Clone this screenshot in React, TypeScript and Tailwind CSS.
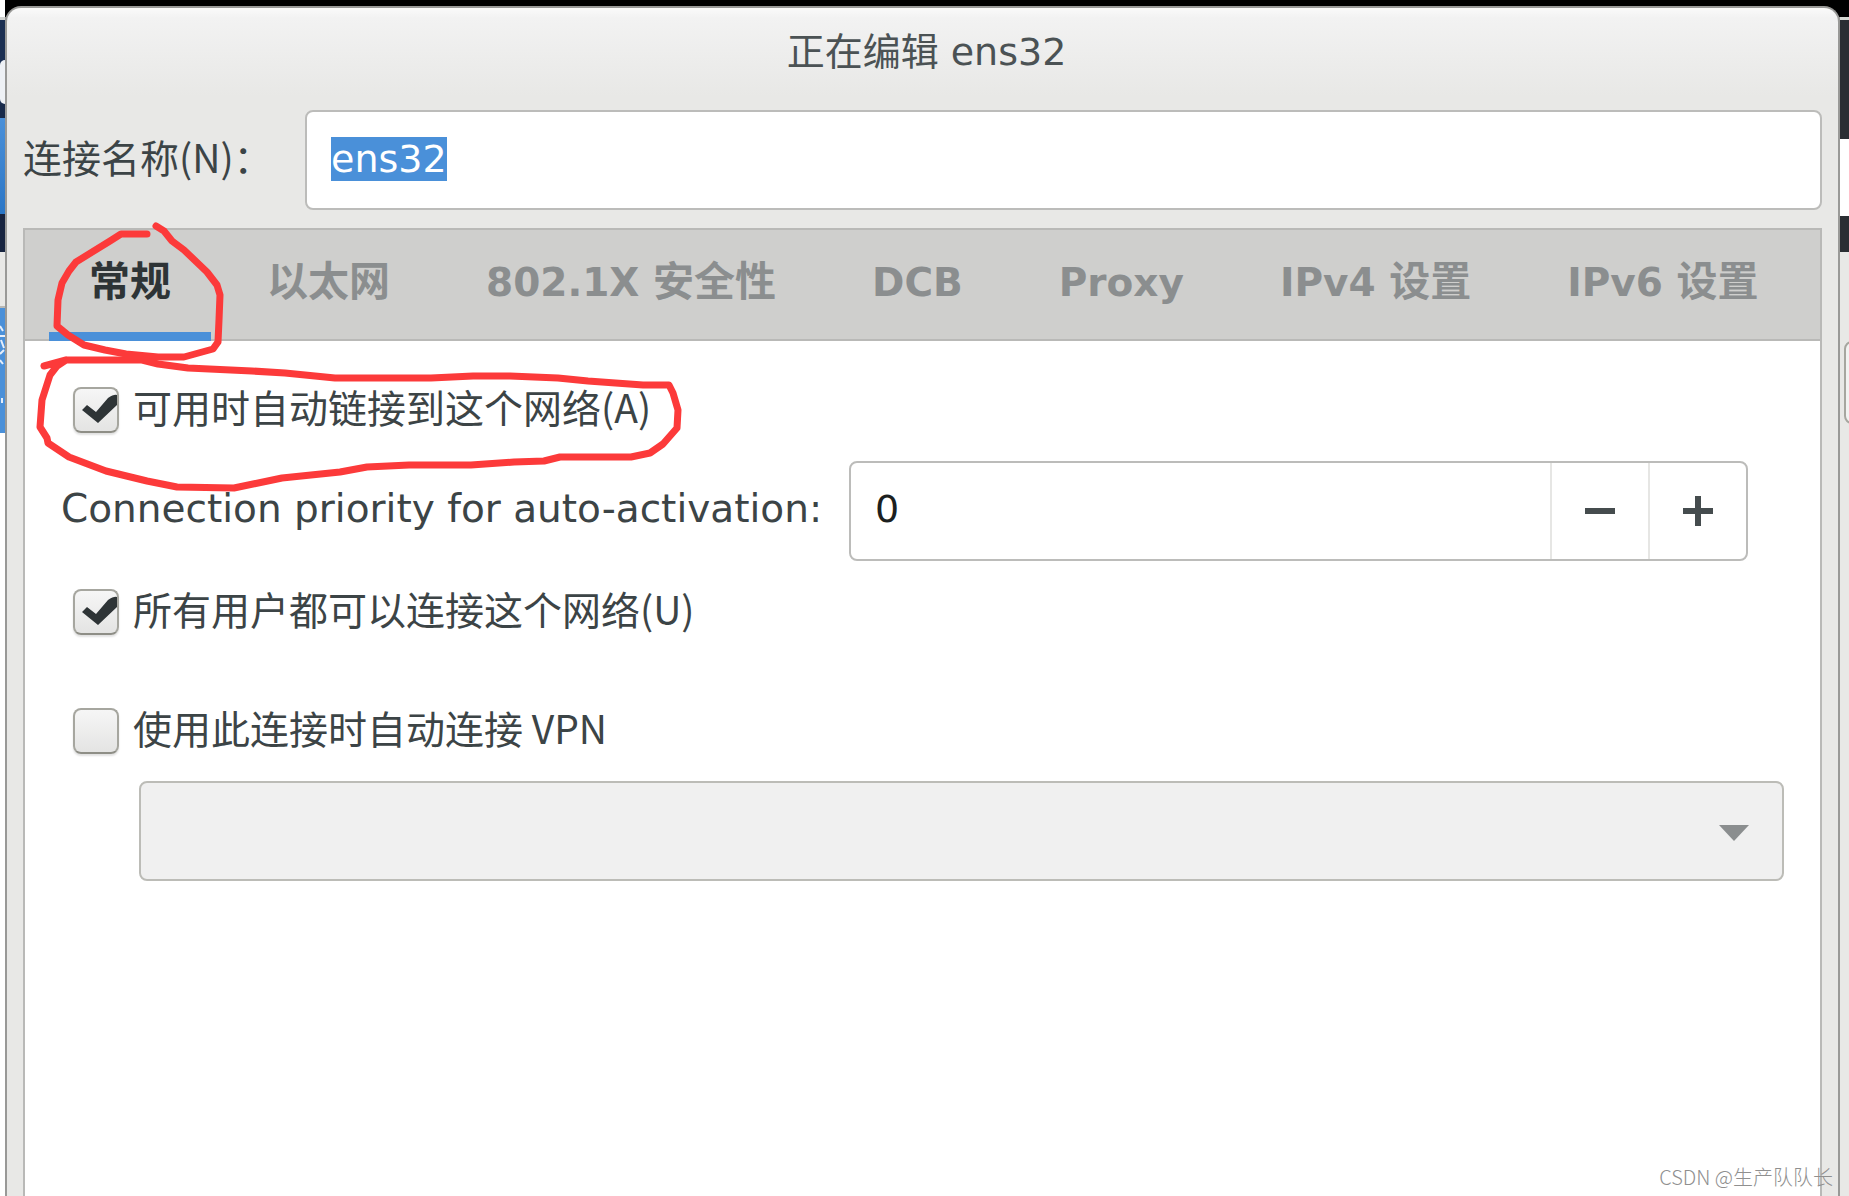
import React, { useEffect, useRef, useState } from "react";

const tabs = [
    { id: "general", latin: "", cjk: "常规" },
    { id: "ethernet", latin: "", cjk: "以太网" },
    { id: "security", latin: "802.1X", cjk: "安全性" },
    { id: "dcb", latin: "DCB", cjk: "" },
    { id: "proxy", latin: "Proxy", cjk: "" },
    { id: "ipv4", latin: "IPv4", cjk: "设置" },
    { id: "ipv6", latin: "IPv6", cjk: "设置" },
];

const cjkFont = "font-['Noto_Sans_CJK_SC',sans-serif]";

function CheckRow({
    label,
    checked,
    onChange,
}: {
    label: string;
    checked: boolean;
    onChange: (value: boolean) => void;
}) {
    return (
        <label className="flex h-12 w-fit items-center gap-[14px]">
            <span className="grid">
                <input
                    type="checkbox"
                    checked={checked}
                    onChange={(e) => onChange(e.target.checked)}
                    className="col-start-1 row-start-1 h-[46px] w-[46px] appearance-none rounded-lg border-2 border-[#a6a69f] border-b-[#8e8e86] bg-linear-to-b from-[#f6f6f6] to-[#e4e4e3] shadow-[0_2px_2px_rgba(0,0,0,0.12)]"
                />
                {checked && (
                    <svg
                        viewBox="0 0 46 46"
                        className="pointer-events-none col-start-1 row-start-1 h-[46px] w-[46px]"
                    >
                        <path
                            d="M9 23 L14 18 L23 25 L35 11 Q41 7 44 8 V18 L25 36 Z"
                            fill="#2e3436"
                        />
                    </svg>
                )}
            </span>
            <span className="pb-2 font-['Noto_Sans_CJK_SC',sans-serif] text-[39px] leading-[48px]">
                {label}
            </span>
        </label>
    );
}

function LeftBackdrop() {
    return (
        <div className="flex w-[5px] flex-col bg-white pt-[17px]">
            <div className="h-[3px] bg-[#d0d2d0]" />
            <div className="h-10 bg-[#1b2f52]" />
            <div className="bg-[#1b2f52]">
                <div className="h-11 rounded-l-full bg-[#eef1f5]" />
            </div>
            <div className="h-[14px] bg-[#182a4a]" />
            <div className="h-24 bg-linear-to-b from-[#4a90d9] to-[#2a76c6]" />
            <div className="h-[38px] bg-[#16233f]" />
            <div className="h-[56px] border-b-2 border-[#b8b8b5] bg-[#e8e8e6]" />
            <svg width="5" height="125" className="bg-[#4a90d9]">
                <path
                    d="M0 18l3 5M0 28h5M1 32l3 8M0 46l4-4M0 52l3 4M2 90v5"
                    stroke="#e6eefa"
                    strokeWidth="2"
                />
            </svg>
        </div>
    );
}

function RightBackdrop() {
    return (
        <div className="flex w-[9px] flex-col overflow-hidden bg-[linear-gradient(#000_17px,#e8e8e6_17px)] pt-[17px]">
            <div className="h-[3px] bg-[#d5d8d3]" />
            <div className="h-[119px] bg-[#2a2e33]" />
            <div className="h-[77px] bg-white" />
            <div className="h-9 bg-[#2a2e33]" />
            <div className="mt-[89px] ml-1 h-[83px] w-10 rounded-lg border-2 border-[#a6a69f] bg-[#f2f2f1]" />
        </div>
    );
}

function Annotations() {
    return (
        <svg
            width="700"
            height="520"
            viewBox="0 0 700 520"
            className="pointer-events-none absolute top-0 left-0"
            fill="none"
            stroke="#fc3a3a"
            strokeWidth="7"
            strokeLinecap="round"
            strokeLinejoin="round"
        >
            <path d="M147 234 H121 L110 241 L76 262 L69 271 L62 283 L58 300 L57 326 L68 335 L84 345 L105 350 L126 354 L158 357 H184 L213 349 L218 342 L219 320 L220 295 L217 285 L207 272 L184 250 L172 241 L164 231 L156 226" />
            <path d="M44 366 L66 360 H142 L158 364 L188 368 L252 371 L285 373 L335 378 H431 L473 376 H510 L558 378 L588 381 L643 385 H669 L673 393 L678 410 L677 428 L663 444 L650 453 L631 457 H560 L544 461 L514 462 L471 465 H409 L367 467 L340 472 L282 478 L234 488 L177 487 L147 481 L106 471 L69 457 L48 443 L47 438 L40 427 L42 400 L50 375 L57 366 L66 360" />
        </svg>
    );
}

export default function App() {
    const nameRef = useRef<HTMLInputElement>(null);
    const [name, setName] = useState("ens32");
    const [activeTab, setActiveTab] = useState("general");
    const [autoConnect, setAutoConnect] = useState(true);
    const [allUsers, setAllUsers] = useState(true);
    const [useVpn, setUseVpn] = useState(false);
    const [priority, setPriority] = useState(0);

    useEffect(() => {
        nameRef.current?.focus();
        nameRef.current?.select();
    }, []);

    return (
        <div className="relative flex min-h-screen bg-black font-['DejaVu_Sans','Noto_Sans_CJK_SC',sans-serif] text-[38px] text-[#3c4446]">
            <LeftBackdrop />
            <div className="flex min-w-0 flex-1 flex-col bg-[linear-gradient(#000_17px,#999_17px)] pt-[6px]">
                <main className="flex flex-1 flex-col rounded-t-2xl border-x-2 border-t-2 border-[#999997] bg-[#e8e8e6] bg-[linear-gradient(#fafafa,#f2f2f2_10px,#e8e8e6_88px)]">
                    <h1 className="pt-[18px] pl-2 text-center leading-[52px] text-[#4b5254]">
                        正在编辑 ens32
                    </h1>
                    <div className="flex items-center px-4 pt-8">
                        <label
                            htmlFor="connection-name"
                            className={`${cjkFont} w-[282px] shrink-0 pb-2 text-[39px]`}
                        >
                            连接名称(N)：
                        </label>
                        <input
                            id="connection-name"
                            ref={nameRef}
                            type="text"
                            value={name}
                            onChange={(e) => setName(e.target.value)}
                            className="h-[100px] min-w-0 flex-1 rounded-lg border-2 border-[#bcbcba] bg-white px-6 pb-[2px] outline-none selection:bg-[#4a90d9] selection:text-white"
                        />
                    </div>
                    <section className="mx-4 mt-[18px] flex flex-1 flex-col border-x-2 border-t-2 border-[#b9b9b7] bg-white">
                        <div
                            role="tablist"
                            className="flex h-[111px] gap-4 border-b-2 border-[#b9b9b7] bg-[#cfcfcd] px-6"
                        >
                            {tabs.map((tab) => (
                                <button
                                    key={tab.id}
                                    role="tab"
                                    aria-selected={tab.id === activeTab}
                                    onClick={() => setActiveTab(tab.id)}
                                    className={`-mb-[2px] border-b-[9px] px-10 pt-1 text-[39px] font-bold whitespace-pre ${
                                        tab.id === activeTab
                                            ? "border-[#4a90d9] text-[#2e3436]"
                                            : "border-transparent text-[#8b8e8f]"
                                    }`}
                                >
                                    {tab.latin}
                                    {tab.latin && tab.cjk ? " " : ""}
                                    <span className="text-[41px]">
                                        {tab.cjk}
                                    </span>
                                </button>
                            ))}
                        </div>
                        <div className="flex flex-col pt-[45px] pr-9 pl-12">
                            <CheckRow
                                label="可用时自动链接到这个网络(A)"
                                checked={autoConnect}
                                onChange={setAutoConnect}
                            />
                            <div className="-ml-3 mt-[27px] mr-9 flex items-center">
                                <label
                                    htmlFor="priority"
                                    className="w-[788px] shrink-0 pb-1 text-[39px] whitespace-nowrap"
                                >
                                    Connection priority for auto-activation:
                                </label>
                                <div className="flex h-[100px] min-w-0 flex-1 rounded-lg border-2 border-[#bcbcba] bg-white">
                                    <input
                                        id="priority"
                                        type="text"
                                        value={priority}
                                        onChange={(e) =>
                                            setPriority(
                                                Number(e.target.value) || 0
                                            )
                                        }
                                        className="min-w-0 flex-1 px-6 pb-1 text-[#1c1f20] outline-none"
                                    />
                                    <button
                                        aria-label="Decrease"
                                        onClick={() =>
                                            setPriority(priority - 1)
                                        }
                                        className="flex w-[98px] items-center justify-center border-l-2 border-[#e6e6e4]"
                                    >
                                        <svg width="30" height="30">
                                            <path
                                                d="M0 12h30v6H0z"
                                                fill="#454c4e"
                                            />
                                        </svg>
                                    </button>
                                    <button
                                        aria-label="Increase"
                                        onClick={() =>
                                            setPriority(priority + 1)
                                        }
                                        className="flex w-[98px] items-center justify-center border-l-2 border-[#e6e6e4]"
                                    >
                                        <svg width="30" height="30">
                                            <path
                                                d="M0 12h12V0h6v12h12v6H18v12h-6V18H0z"
                                                fill="#454c4e"
                                            />
                                        </svg>
                                    </button>
                                </div>
                            </div>
                            <div className="mt-[27px]">
                                <CheckRow
                                    label="所有用户都可以连接这个网络(U)"
                                    checked={allUsers}
                                    onChange={setAllUsers}
                                />
                            </div>
                            <div className="mt-[71px]">
                                <CheckRow
                                    label="使用此连接时自动连接 VPN"
                                    checked={useVpn}
                                    onChange={setUseVpn}
                                />
                            </div>
                            <div className="mt-[26px] ml-[66px] grid items-center">
                                <select
                                    aria-label="VPN"
                                    disabled={!useVpn}
                                    className="col-start-1 row-start-1 h-[100px] w-full appearance-none rounded-lg border-2 border-[#bcbcb7] bg-[#f0f0f0] opacity-100"
                                />
                                <svg
                                    width="30"
                                    height="16"
                                    className="pointer-events-none col-start-1 row-start-1 mt-1 mr-[35px] justify-self-end"
                                >
                                    <path d="M0 0h30L15 16z" fill="#8b8e8f" />
                                </svg>
                            </div>
                        </div>
                    </section>
                </main>
            </div>
            <RightBackdrop />
            <Annotations />
            <p className="absolute right-4 bottom-1 font-['Noto_Sans_CJK_SC',sans-serif] text-[20px] leading-[30px] font-light text-[#8f8f8f]">
                CSDN @生产队队长
            </p>
        </div>
    );
}
